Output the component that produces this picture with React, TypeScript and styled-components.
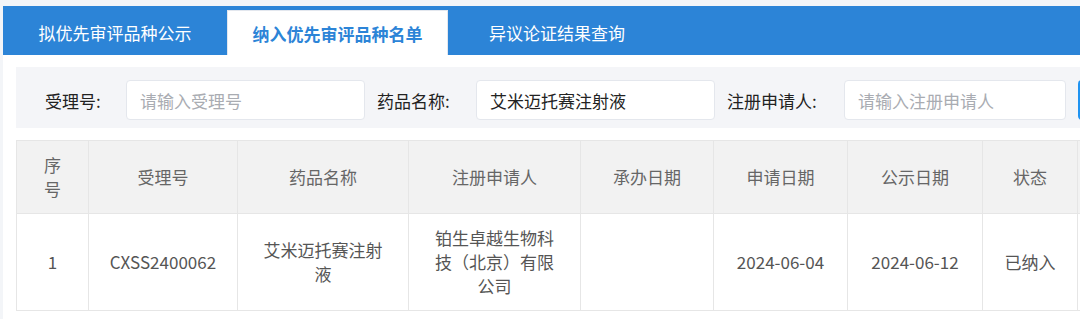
import React from 'react'
import styled, { createGlobalStyle } from 'styled-components'

const GlobalStyle = createGlobalStyle`
	body {
		margin: 0;
		background: #f3f5f8;
		font-family: "Microsoft YaHei", "Noto Sans CJK SC", "Noto Sans", sans-serif;
	}
`

const Page = styled.div`
	width: 1080px;
	height: 319px;
	padding: 6px 0 0 3px;
	box-sizing: border-box;
	overflow: hidden;
`

const TabBar = styled.div`
	display: flex;
	align-items: flex-end;
	height: 49px;
	background: #2c84d7;
`

const Tab = styled.div<{ $width: number; $active?: boolean }>`
	width: ${(p) => p.$width}px;
	height: 45px;
	box-sizing: border-box;
	display: flex;
	align-items: center;
	justify-content: center;
	font-size: 17px;
	color: ${(p) => (p.$active ? '#2c84d7' : '#ffffff')};
	font-weight: ${(p) => (p.$active ? 700 : 400)};
	background: ${(p) => (p.$active ? '#ffffff' : 'transparent')};
	border: ${(p) => (p.$active ? '1px solid #e3e7ee' : 'none')};
	border-bottom: none;
`

const Body = styled.div`
	background: #ffffff;
	padding: 12px 0 10px 13px;
	height: 100%;
`

const SearchPanel = styled.div`
	display: flex;
	align-items: center;
	height: 61px;
	box-sizing: border-box;
	padding: 5px 0 0 29px;
	background: #f4f5f8;
	white-space: nowrap;
`

const Label = styled.div<{ $width: number }>`
	width: ${(p) => p.$width}px;
	flex-shrink: 0;
	font-size: 17px;
	color: #222;
`

const Input = styled.div<{ $width: number; $filled?: boolean }>`
	width: ${(p) => p.$width}px;
	height: 40px;
	flex-shrink: 0;
	box-sizing: border-box;
	margin-right: 12px;
	padding-left: 13px;
	display: flex;
	align-items: center;
	background: #ffffff;
	border: 1px solid #e4e7ed;
	border-radius: 4px;
	font-size: 17px;
	color: ${(p) => (p.$filled ? '#222' : '#a9acb2')};
`

const SearchButton = styled.div`
	width: 60px;
	height: 40px;
	flex-shrink: 0;
	border-radius: 4px;
	background: #1f93f1;
`

const TableWrap = styled.div`
	margin-top: 12px;
	overflow: hidden;
`

const Table = styled.table`
	border-collapse: collapse;
	table-layout: fixed;
	width: 1200px;
	font-size: 17px;
	line-height: 24px;
`

const Th = styled.th`
	height: 72px;
	box-sizing: border-box;
	padding: 12px 20px;
	background: #f2f2f2;
	border: 1px solid #e6e6e6;
	color: #666;
	font-weight: 400;
	text-align: center;
`

const Td = styled.td`
	height: 96px;
	box-sizing: border-box;
	padding: 12px 20px;
	border: 1px solid #e6e6e6;
	color: #555;
	text-align: center;
	word-break: break-all;
`

const columns = [
	{ key: 'no', title: '序号', width: 72 },
	{ key: 'acceptNo', title: '受理号', width: 149 },
	{ key: 'drug', title: '药品名称', width: 171 },
	{ key: 'applicant', title: '注册申请人', width: 172 },
	{ key: 'handled', title: '承办日期', width: 133 },
	{ key: 'applied', title: '申请日期', width: 134 },
	{ key: 'published', title: '公示日期', width: 135 },
	{ key: 'status', title: '状态', width: 95 },
	{ key: 'extra', title: '', width: 139 },
]

const rows = [
	[
		'1',
		'CXSS2400062',
		'艾米迈托赛注射液',
		'铂生卓越生物科技（北京）有限公司',
		'',
		'2024-06-04',
		'2024-06-12',
		'已纳入',
		'',
	],
]

export default function App() {
	return (
		<Page>
			<GlobalStyle />
			<TabBar>
				<Tab $width={224}>拟优先审评品种公示</Tab>
				<Tab $width={221} $active>
					纳入优先审评品种名单
				</Tab>
				<Tab $width={218}>异议论证结果查询</Tab>
			</TabBar>
			<Body>
				<SearchPanel>
					<Label $width={81}>受理号:</Label>
					<Input $width={239}>请输入受理号</Input>
					<Label $width={99}>药品名称:</Label>
					<Input $width={239} $filled>
						艾米迈托赛注射液
					</Input>
					<Label $width={117}>注册申请人:</Label>
					<Input $width={222}>请输入注册申请人</Input>
					<SearchButton />
				</SearchPanel>
				<TableWrap>
					<Table>
						<colgroup>
							{columns.map((c) => (
								<col key={c.key} style={{ width: c.width }} />
							))}
						</colgroup>
						<thead>
							<tr>
								{columns.map((c) => (
									<Th key={c.key}>{c.title}</Th>
								))}
							</tr>
						</thead>
						<tbody>
							{rows.map((r, i) => (
								<tr key={i}>
									{r.map((v, j) => (
										<Td key={j}>{v}</Td>
									))}
								</tr>
							))}
						</tbody>
					</Table>
				</TableWrap>
			</Body>
		</Page>
	)
}
